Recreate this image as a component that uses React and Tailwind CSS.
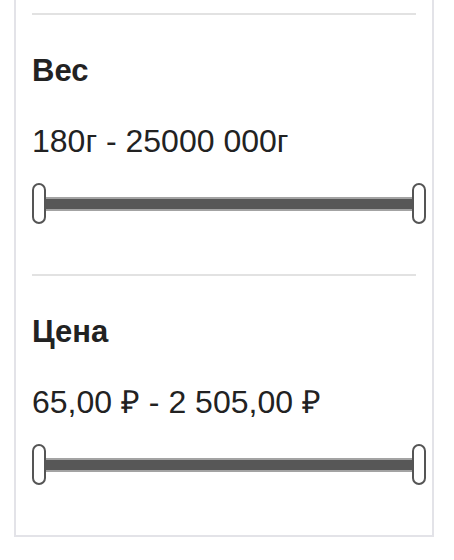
const RangeSlider = () => {
  return (
    <div className="relative h-[41px] w-[394px]">
      {/* дорожка */}
      <div className="absolute left-[12px] right-[12px] top-[14px] h-[14px] border-y-2 border-[#a3a3a3] bg-[#575757]" />
      {/* ручки */}
      <div className="absolute left-0 top-0 h-[41px] w-[14px] rounded-full border-2 border-[#555] bg-white" />
      <div className="absolute right-0 top-0 h-[41px] w-[14px] rounded-full border-2 border-[#555] bg-white" />
    </div>
  )
}

const FilterSection = ({ title, value }) => {
  return (
    <div className="pb-[50px]">
      <div className="h-[2px] w-[384px] bg-[#e2e2e2]" />
      <h3 className="mt-[37px] text-[31px] font-bold leading-[38px] text-[#222]">{title}</h3>
      <p className="mt-[32px] text-[32px] leading-[38px] text-[#222]">{value}</p>
      <div className="mt-[23px]">
        <RangeSlider />
      </div>
    </div>
  )
}

export default function App() {
  return (
    <div className="min-h-[560px] bg-white" style={{ fontFamily: '"Liberation Sans", Arial, sans-serif' }}>
      <div className="ml-[14px] w-[420px] border-2 border-t-0 border-[#e3e3e8] px-4 pt-[13px]">
        <FilterSection title="Вес" value="180г - 25000 000г" />
        <FilterSection title="Цена" value="65,00 ₽ - 2 505,00 ₽" />
      </div>
    </div>
  )
}
